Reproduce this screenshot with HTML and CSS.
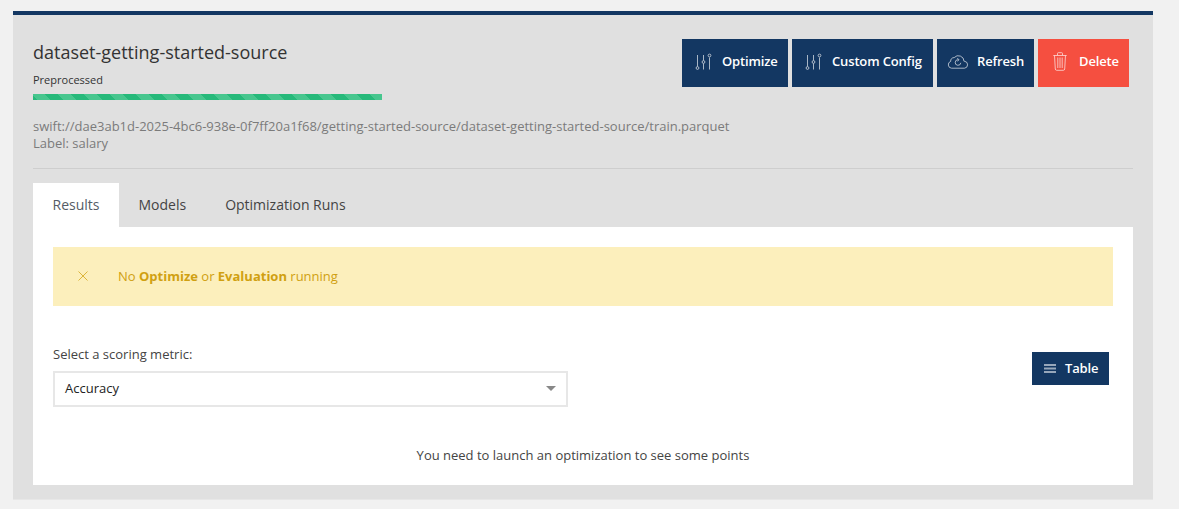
FILE: index.html
```html
<!DOCTYPE html>
<html lang="en">
<head>
<meta charset="utf-8">
<title>dataset-getting-started-source</title>
<link rel="stylesheet" href="styles.css">
</head>
<body>
<main class="card">
  <header class="head">
    <div class="info">
      <h1 class="title">dataset-getting-started-source</h1>
      <div class="status">Preprocessed</div>
      <div class="progress"></div>
    </div>
    <div class="actions">
      <button class="btn optimize"><svg class="icon sliders" viewBox="0 0 18 18"><path d="M2.500 2v11.500M8.500 2v5.500M8.500 10.500v6M14.500 4.500v12"/><circle cx="2.500" cy="15" r="1.400"/><circle cx="8.500" cy="9" r="1.400"/><circle cx="14.500" cy="2.500" r="1.400"/></svg><span>Optimize</span></button>
      <button class="btn config"><svg class="icon sliders" viewBox="0 0 18 18"><path d="M2.500 2v11.500M8.500 2v5.500M8.500 10.500v6M14.500 4.500v12"/><circle cx="2.500" cy="15" r="1.400"/><circle cx="8.500" cy="9" r="1.400"/><circle cx="14.500" cy="2.500" r="1.400"/></svg><span>Custom Config</span></button>
      <button class="btn refresh"><svg class="icon cloud" viewBox="0 0 22 16"><path d="M4.500 14.200h13a3.500 3.500 0 0 0 .3-6.900h-.8A5.600 5.600 0 0 0 7.200 3.600 3.300 3.300 0 0 0 3.700 7.400 3.500 3.500 0 0 0 4.500 14.200z"/><path d="M13.800 8.800a2.800 2.800 0 1 1-2.600-3.100M10.200 4.300l1.800 1.400-1.500 1.700"/></svg><span>Refresh</span></button>
      <button class="btn delete"><svg class="icon trash" viewBox="0 0 14 19"><path d="M.3 3.500h13.400M4.500 3.300V1.500q0-.8.8-.8h3.400q.8 0 .8.800v1.800M1.500 3.500l.8 13.500q.1 1.300 1.400 1.300h6.600q1.300 0 1.400-1.300l.8-13.500M4.800 5.500v10.500M7 5.500v10.500M9.200 5.500v10.500"/></svg><span>Delete</span></button>
    </div>
  </header>
  <div class="meta">
    <div>swift://dae3ab1d-2025-4bc6-938e-0f7ff20a1f68/getting-started-source/dataset-getting-started-source/train.parquet</div>
    <div>Label: salary</div>
  </div>
  <nav class="tabs">
    <a class="tab active">Results</a>
    <a class="tab">Models</a>
    <a class="tab">Optimization Runs</a>
  </nav>
  <section class="panel">
    <div class="alert">
      <svg class="cross" viewBox="0 0 10 10"><path d="M.5.5l9 9M9.500.5l-9 9"/></svg>
      <span>No <b>Optimize</b> or <b>Evaluation</b> running</span>
    </div>
    <div class="controls">
      <div class="field">
        <div class="label">Select a scoring metric:</div>
        <div class="select"><span>Accuracy</span><i class="caret"></i></div>
      </div>
      <button class="btn table"><svg class="icon lines" viewBox="0 0 12 9"><path d="M0 0h12v2H0zM0 3.500h12v2H0zM0 7h12v2H0z"/></svg><span>Table</span></button>
    </div>
    <p class="empty">You need to launch an optimization to see some points</p>
  </section>
</main>
</body>
</html>
```
FILE: styles.css
```css
* { box-sizing: border-box; }
body {
  margin: 0;
  padding: 11px 26px 0 13px;
  height: 509px;
  overflow: hidden;
  background: #f1f1f1;
  color: #444;
  font: 13px/18px "Open Sans", sans-serif;
}
.card {
  height: 489px;
  padding: 24px 20px 0;
  background: #e0e0e0;
  border-top: 4px solid #133762;
  border-bottom: 1px solid #e7e7e7;
}
.head { display: flex; justify-content: space-between; height: 79px; }
.info { width: 349px; }
.title { margin: 0; font-size: 18px; line-height: 26px; font-weight: 400; color: #333; white-space: nowrap; }
.status { margin-top: 6px; font-size: 11px; line-height: 18px; color: #333; }
.progress {
  height: 6px;
  margin-top: 5px;
  background: linear-gradient(45deg, #47c68e 25%, #26b97a 25%, #26b97a 50%, #47c68e 50%, #47c68e 75%, #26b97a 75%) -2px 0 / 26px 26px;
}
.actions { display: flex; gap: 4px; padding-right: 4px; }
.btn {
  display: flex;
  align-items: center;
  height: 48px;
  padding: 0 0 4px 13px;
  border: 0;
  background: #133762;
  color: #fff;
  font: 600 13px/18px "Open Sans", sans-serif;
  letter-spacing: -.15px;
  white-space: nowrap;
}
.optimize { width: 106px; }
.config { width: 141px; }
.refresh { width: 97px; padding-left: 10px; }
.delete { width: 91px; padding-left: 15px; background: #f54f40; }
.icon { flex: none; fill: none; stroke: currentColor; stroke-width: .8; opacity: .8; }
.sliders { width: 18px; height: 18px; margin-right: 9px; }
.cloud { width: 22px; height: 16px; margin-right: 8px; }
.trash { width: 14px; height: 19px; margin-right: 12px; }
.btn .icon { margin-top: 1px; }
.meta {
  height: 51px;
  border-bottom: 1px solid #cecece;
  color: #7b7b7b;
  line-height: 17px;
}
.tabs { display: flex; height: 44px; margin-top: 14px; }
.tab { padding: 0 19.500px; font-size: 14px; line-height: 44px; color: #444; }
.active { background: #fff; color: #555c66; }
.panel { height: 258px; padding: 20px; background: #fff; }
.alert { display: flex; align-items: center; height: 59px; padding: 0 0 1px 25px; background: #fcefbc; color: #d0a011; }
.alert b { font-weight: 700; }
.cross { width: 10px; height: 10px; margin-right: 30px; fill: none; stroke: #dcb53a; stroke-width: 1; }
.controls { display: flex; justify-content: space-between; margin-top: 39px; padding-right: 4px; }
.field { width: 515px; }
.select {
  display: flex;
  align-items: center;
  justify-content: space-between;
  height: 36px;
  margin-top: 8px;
  padding: 0 10px 2px 10px;
  border: 2px solid #e7e7e7;
  color: #222;
}
.caret { border: 5px solid transparent; border-top-color: #888; border-bottom: 0; }
.table { width: 77px; height: 33px; margin-top: 7px; padding: 0 0 1px 12px; }
.table .lines { width: 12px; height: 9px; margin: 0 9px 0 0; stroke: none; fill: #b8c3d0; }
.empty { margin: 39px 0 0; text-align: center; }
```
